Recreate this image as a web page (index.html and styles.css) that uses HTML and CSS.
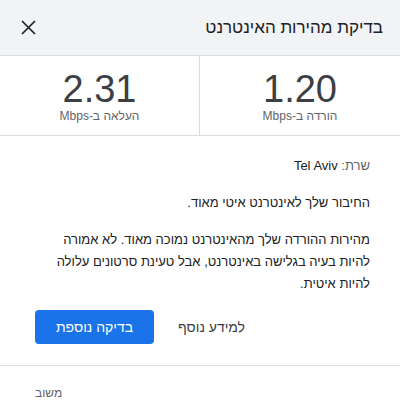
FILE: index.html
```html
<!DOCTYPE html>
<html lang="he" dir="rtl">
<head>
  <meta charset="UTF-8">
  <title>בדיקת מהירות האינטרנט</title>
  <link rel="stylesheet" href="styles.css">
</head>
<body>
<div class="panel">
  <div class="header">
    <div class="title">בדיקת מהירות האינטרנט</div>
    <button class="close" aria-label="סגירה">
      <svg width="15" height="15" viewBox="0 0 15 15">
        <path d="M1 1L14 14M14 1L1 14" stroke="#202124" stroke-width="1.7" fill="none"/>
      </svg>
    </button>
  </div>

  <div class="stats">
    <div class="stat">
      <div class="value">1.20</div>
      <div class="unit">הורדה ב-Mbps</div>
    </div>
    <div class="stat">
      <div class="value">2.31</div>
      <div class="unit">העלאה ב-Mbps</div>
    </div>
  </div>

  <div class="content">
    <p class="server"><span class="muted">שרת:</span> Tel Aviv</p>
    <p>החיבור שלך לאינטרנט איטי מאוד.</p>
    <p>מהירות ההורדה שלך מהאינטרנט נמוכה מאוד. לא אמורה להיות בעיה בגלישה באינטרנט, אבל טעינת סרטונים עלולה להיות איטית.</p>
    <div class="actions">
      <a class="more" href="#">למידע נוסף</a>
      <button class="again">בדיקה נוספת</button>
    </div>
  </div>

  <div class="footer">
    <a class="feedback" href="#">משוב</a>
  </div>
</div>
</body>
</html>
```

FILE: styles.css
```css
body {
  margin: 0;
  font-family: "Liberation Sans", Arial, sans-serif;
  background-color: #ffffff;
  color: #202124;
}

.header {
  height: 55px;
  display: flex;
  align-items: center;
  justify-content: space-between;
  padding: 0 17px 0 20px;
  background-color: #f1f3f4;
  border-bottom: 1px solid #dadce0;
}

.title {
  font-size: 17px;
}

.close {
  border: none;
  background: none;
  padding: 0;
  width: 16px;
  height: 16px;
  display: flex;
  align-items: center;
  justify-content: center;
  cursor: pointer;
}

.stats {
  display: grid;
  grid-template-columns: 1fr 1fr;
  height: 79px;
  border-bottom: 1px solid #dadce0;
}

.stat {
  display: flex;
  flex-direction: column;
  align-items: center;
  justify-content: center;
}

.stat + .stat {
  border-right: 1px solid #dadce0;
}

.value {
  font-size: 38px;
  line-height: 40px;
  color: #3c4043;
}

.unit {
  font-size: 12px;
  line-height: 14px;
  color: #5f6368;
}

.content {
  padding: 19px 30px 21px 35px;
  border-bottom: 1px solid #dadce0;
}

.content p {
  margin: 0 0 15px;
  font-size: 13px;
  line-height: 22px;
}

.muted {
  color: #5f6368;
}

.actions {
  display: flex;
  align-items: center;
  justify-content: flex-end;
  gap: 24px;
  margin-top: 14px;
}

.more {
  font-size: 14px;
  color: #3c4043;
  text-decoration: none;
}

.again {
  width: 119px;
  height: 34px;
  border: none;
  border-radius: 4px;
  background-color: #1a73e8;
  color: #ffffff;
  font-family: inherit;
  font-size: 14px;
  cursor: pointer;
}

.footer {
  display: flex;
  justify-content: flex-end;
  padding: 20px 35px;
}

.feedback {
  font-size: 12px;
  color: #5f6368;
  text-decoration: none;
}
```
